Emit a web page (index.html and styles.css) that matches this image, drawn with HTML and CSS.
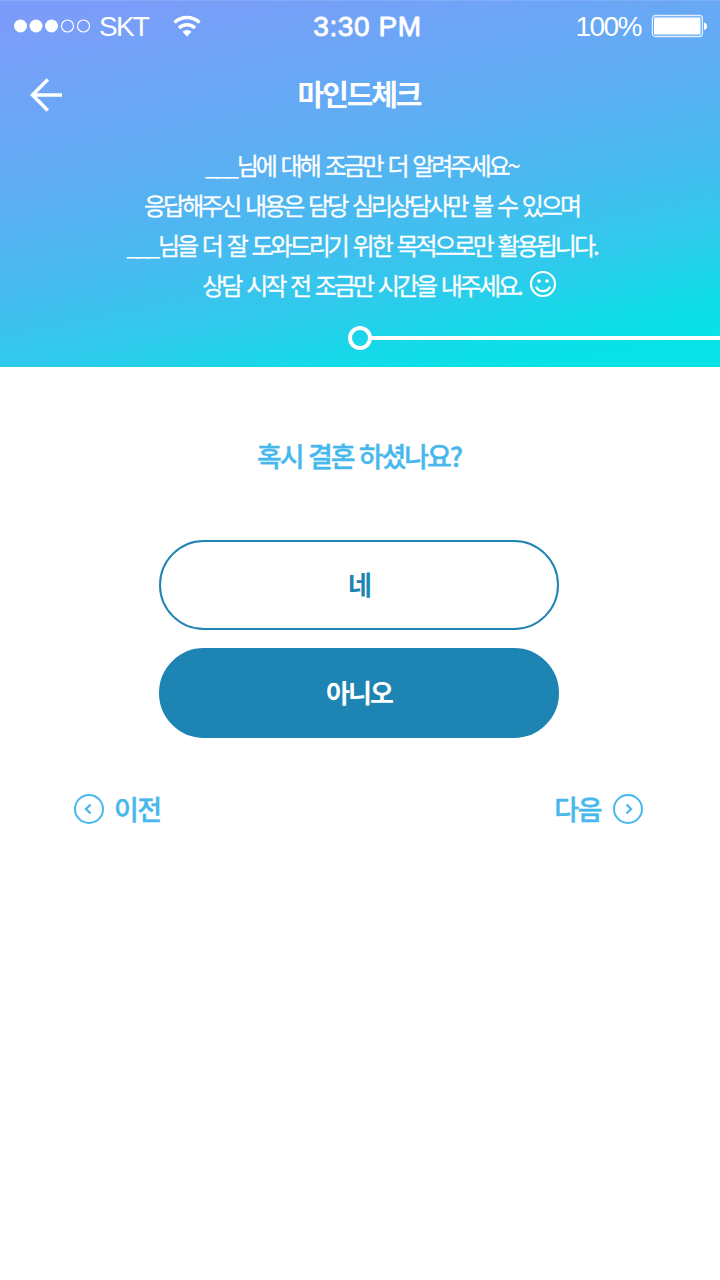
FILE: index.html
```html
<!DOCTYPE html>
<html lang="ko">
<head>
<meta charset="utf-8">
<title>마인드체크</title>
<link rel="stylesheet" href="styles.css">
</head>
<body>
<header class="hero">
  <div class="status">
    <div class="carrier">
      <svg class="signal" width="76" height="14" viewBox="0 0 76 14"><g fill="#fff"><circle cx="6.500" cy="7" r="6.500"/><circle cx="22" cy="7" r="6.500"/><circle cx="37.500" cy="7" r="6.500"/></g><g fill="none" stroke="#fff" stroke-width="1.100"><circle cx="53.500" cy="7" r="6"/><circle cx="69.500" cy="7" r="6"/></g></svg>
      <span class="network">SKT</span>
      <svg class="wifi" width="28" height="22" viewBox="0 0 28 22" fill="none" stroke="#fff" stroke-width="3.400"><path d="M1.500 7.500a18 18 0 0 1 25 0M6 13a11.500 11.500 0 0 1 16 0"/><path d="M14 21.500l-4.500-4.800a6.500 6.500 0 0 1 9 0z" fill="#fff" stroke="none"/></svg>
    </div>
    <span class="clock">3:30 PM</span>
    <div class="power"><span class="level">100%</span>
      <svg class="battery" width="56" height="24" viewBox="0 0 56 24"><rect x="1.400" y="1.500" width="50" height="21" rx="3" fill="none" stroke="#fff" stroke-opacity=".8" stroke-width="1.300"/><rect x="3" y="3.500" width="46.500" height="17" rx="1" fill="#fff"/><path d="M53 8.500q3 .7 3 3.700t-3 3.700z" fill="#fff"/></svg>
    </div>
  </div>
  <nav class="navbar">
    <svg class="back" width="34" height="34" viewBox="0 0 34 34" fill="none" stroke="#fff" stroke-width="3.500"><path d="M18.800 1.500L3.500 17l15.300 15.500M3 17h30"/></svg>
    <h1 class="title">마인드체크</h1>
  </nav>
  <div class="intro">
    <p class="line"><span class="blank">___</span>님에 대해 조금만 더 알려주세요~</p>
    <p class="line">응답해주신 내용은 담당 심리상담사만 볼 수 있으며</p>
    <p class="line"><span class="blank">___</span>님을 더 잘 도와드리기 위한 목적으로만 활용됩니다.</p>
    <p class="line last">상담 시작 전 조금만 시간을 내주세요.
      <svg class="smile" width="28" height="28" viewBox="0 0 28 28" fill="none" stroke="#fff" stroke-width="2.200"><circle cx="14" cy="13" r="12"/><path d="M7 15.500a7.600 7.600 0 0 0 14 0"/><circle cx="10" cy="10" r="1.800" fill="#fff" stroke="none"/><circle cx="18" cy="10" r="1.800" fill="#fff" stroke="none"/></svg>
    </p>
  </div>
  <div class="progress"><span class="knob"></span><span class="track"></span></div>
</header>
<main class="survey">
  <h2 class="question">혹시 결혼 하셨나요?</h2>
  <div class="answers">
    <button class="answer">네</button>
    <button class="answer selected">아니오</button>
  </div>
  <div class="pager">
    <a class="step"><svg width="30" height="30" viewBox="0 0 30 30" fill="none" stroke="#46b8ec" stroke-width="2"><circle cx="15" cy="15" r="14"/><path d="M16.500 10.500L12 15l4.500 4.500" stroke-width="2.300"/></svg><span>이전</span></a>
    <a class="step next"><span>다음</span><svg width="30" height="30" viewBox="0 0 30 30" fill="none" stroke="#46b8ec" stroke-width="2"><circle cx="15" cy="15" r="14"/><path d="M13.500 10.500L18 15l-4.500 4.500" stroke-width="2.300"/></svg></a>
  </div>
</main>
</body>
</html>
```
FILE: styles.css
```css
* { box-sizing: border-box; }
body { margin: 0; background: #fff; font-family: "Noto Sans CJK KR", sans-serif; }
h1, h2, p { margin: 0; }
.hero { height: 367px; color: #fff; background: linear-gradient(169deg, #7b9df9 6%, #5fadf3 38%, #46bbef 58%, #2fcaec 73%, #12dbe8 85%, #06e2e6 93%); box-shadow: inset 0 1px rgba(255, 255, 255, .12); }
.status { height: 52px; display: grid; grid-template-columns: 1fr auto 1fr; align-items: center; padding: 0 13px 0 14px; font: 28px/54px "Liberation Sans", sans-serif; }
.carrier, .power { display: flex; align-items: center; }
.signal, .wifi, .battery { margin-bottom: 2px; }
.network { width: 60px; margin-left: 9px; letter-spacing: -1.8px; }
.wifi { margin-left: 14px; }
.clock { padding-left: 14px; letter-spacing: .6px; -webkit-text-stroke: .8px #fff; }
.power { justify-content: flex-end; gap: 10px; }
.level { letter-spacing: -1.5px; }
.navbar { height: 86px; display: grid; grid-template-columns: 34px 1fr 34px; align-items: center; padding: 0 29px; }
.title { padding: 0 2px 4px 0; text-align: center; font-size: 29px; line-height: 82px; font-weight: 700; letter-spacing: -2.1px; }
.intro { padding: 7px 0 1px 3px; text-align: center; }
.line { font-size: 24px; line-height: 40px; letter-spacing: -3px; word-spacing: 2px; white-space: nowrap; -webkit-text-stroke: .3px #fff; }
.blank { letter-spacing: -3.2px; margin-right: 1px; -webkit-text-stroke: 0; }
.last { display: flex; justify-content: center; align-items: center; gap: 8px; padding-left: 36px; }
.progress { display: flex; align-items: center; padding: 20px 0 0 348px; }
.knob { width: 24px; height: 24px; border: 4px solid #fff; border-radius: 50%; }
.track { flex: 1; height: 4px; background: #fff; }
.question { padding: 69px 2px 0 0; text-align: center; font-size: 27px; line-height: 40px; color: #46b8ec; font-weight: 500; letter-spacing: -2.1px; -webkit-text-stroke: .4px #46b8ec; }
.answers { display: flex; flex-direction: column; gap: 18px; width: 400px; margin: 64px 0 0 159px; }
.answer { height: 90px; padding: 0 0 4px; border: 2px solid #1d84b3; border-radius: 45px; background: #fff; color: #1d84b3; font: 700 26px "Noto Sans CJK KR", sans-serif; letter-spacing: -2px; }
.selected { background: #1d84b3; color: #fff; }
.pager { display: flex; justify-content: space-between; padding: 51px 77px 0 74px; color: #46b8ec; font-size: 27px; line-height: 40px; font-weight: 500; letter-spacing: -1.5px; -webkit-text-stroke: .4px #46b8ec; }
.step { display: flex; align-items: center; gap: 10px; }
.next { gap: 12px; }
```
